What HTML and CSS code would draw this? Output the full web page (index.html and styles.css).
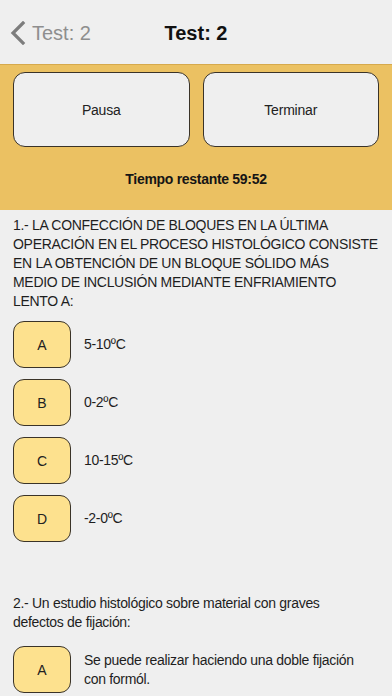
FILE: index.html
```html
<!DOCTYPE html>
<html lang="es">
<head>
<meta charset="utf-8">
<link rel="stylesheet" href="styles.css">
</head>
<body>
<header class="nav">
  <div class="back">
    <svg class="chev" width="16" height="24" viewBox="0 0 16 24"><path d="M13 2 L3 12 L13 22" fill="none" stroke="#7d7d7d" stroke-width="3.2" stroke-linecap="square"/></svg>
    <span>Test: 2</span>
  </div>
  <div class="title">Test: 2</div>
  <div></div>
</header>
<section class="panel">
  <div class="actions">
    <button class="btn">Pausa</button>
    <button class="btn">Terminar</button>
  </div>
  <div class="timer">Tiempo restante 59:52</div>
</section>
<main class="content">
  <div class="question">
    <p class="qtext">1.- LA CONFECCIÓN DE BLOQUES EN LA ÚLTIMA<br>OPERACIÓN EN EL PROCESO HISTOLÓGICO CONSISTE<br>EN LA OBTENCIÓN DE UN BLOQUE SÓLIDO MÁS<br>MEDIO DE INCLUSIÓN MEDIANTE ENFRIAMIENTO<br>LENTO A:</p>
    <div class="options">
      <div class="opt"><div class="key">A</div><div class="otext">5-10ºC</div></div>
      <div class="opt"><div class="key">B</div><div class="otext">0-2ºC</div></div>
      <div class="opt"><div class="key">C</div><div class="otext">10-15ºC</div></div>
      <div class="opt"><div class="key">D</div><div class="otext">-2-0ºC</div></div>
    </div>
  </div>
  <div class="question q2">
    <p class="qtext">2.- Un estudio histológico sobre material con graves<br>defectos de fijación:</p>
    <div class="options">
      <div class="opt"><div class="key">A</div><div class="otext">Se puede realizar haciendo una doble fijación<br>con formól.</div></div>
    </div>
  </div>
</main>
</body>
</html>
```
FILE: styles.css
```css
* { box-sizing: border-box; }
html, body { margin: 0; padding: 0; }
body {
  background: #efefef;
  font-family: "Liberation Sans", Arial, sans-serif;
  color: #1a1a1a;
  width: 392px;
  height: 696px;
  overflow: hidden;
}
.nav {
  height: 64px;
  display: grid;
  grid-template-columns: 1fr auto 1fr;
  align-items: center;
  padding-top: 2px;
}
.back {
  display: flex;
  align-items: center;
  gap: 6px;
  padding-left: 10px;
  color: #8e8e8e;
  font-size: 20px;
}
.chev { display: block; margin-top: -1px; }
.title {
  font-size: 20px;
  font-weight: bold;
  color: #111;
}
.panel {
  background: #ebc162;
  border-top: 1px solid #d6a94c;
  padding: 7px 13px 0;
}
.actions {
  display: grid;
  grid-template-columns: 1fr 1fr;
  gap: 13px;
}
.btn {
  height: 75px;
  background: #efefef;
  border: 1.5px solid #3a3328;
  border-radius: 12px;
  font-family: inherit;
  font-size: 14px;
  letter-spacing: -0.2px;
  color: #222;
  padding: 0;
}
.timer {
  height: 63px;
  display: flex;
  align-items: center;
  justify-content: center;
  font-size: 14px;
  letter-spacing: -0.3px;
  font-weight: bold;
  color: #151515;
}
.content { padding: 0 6px 0 13px; }
.question { padding-top: 6px; }
.q2 { padding-top: 52px; }
.qtext {
  margin: 0;
  font-size: 14px;
  letter-spacing: -0.3px;
  line-height: 19px;
  color: #1e1e1e;
  white-space: nowrap;
}
.options {
  display: flex;
  flex-direction: column;
  gap: 11px;
  margin-top: 10px;
}
.q2 .options { margin-top: 14px; }
.opt {
  display: flex;
  align-items: center;
  gap: 13px;
}
.key {
  flex: none;
  width: 58px;
  height: 47px;
  background: #fde18e;
  border: 1.5px solid #3a3328;
  border-radius: 11px;
  display: flex;
  align-items: center;
  justify-content: center;
  font-size: 14px;
  color: #222;
}
.otext {
  font-size: 14px;
  letter-spacing: -0.3px;
  line-height: 19px;
  color: #1e1e1e;
  white-space: nowrap;
}
```
